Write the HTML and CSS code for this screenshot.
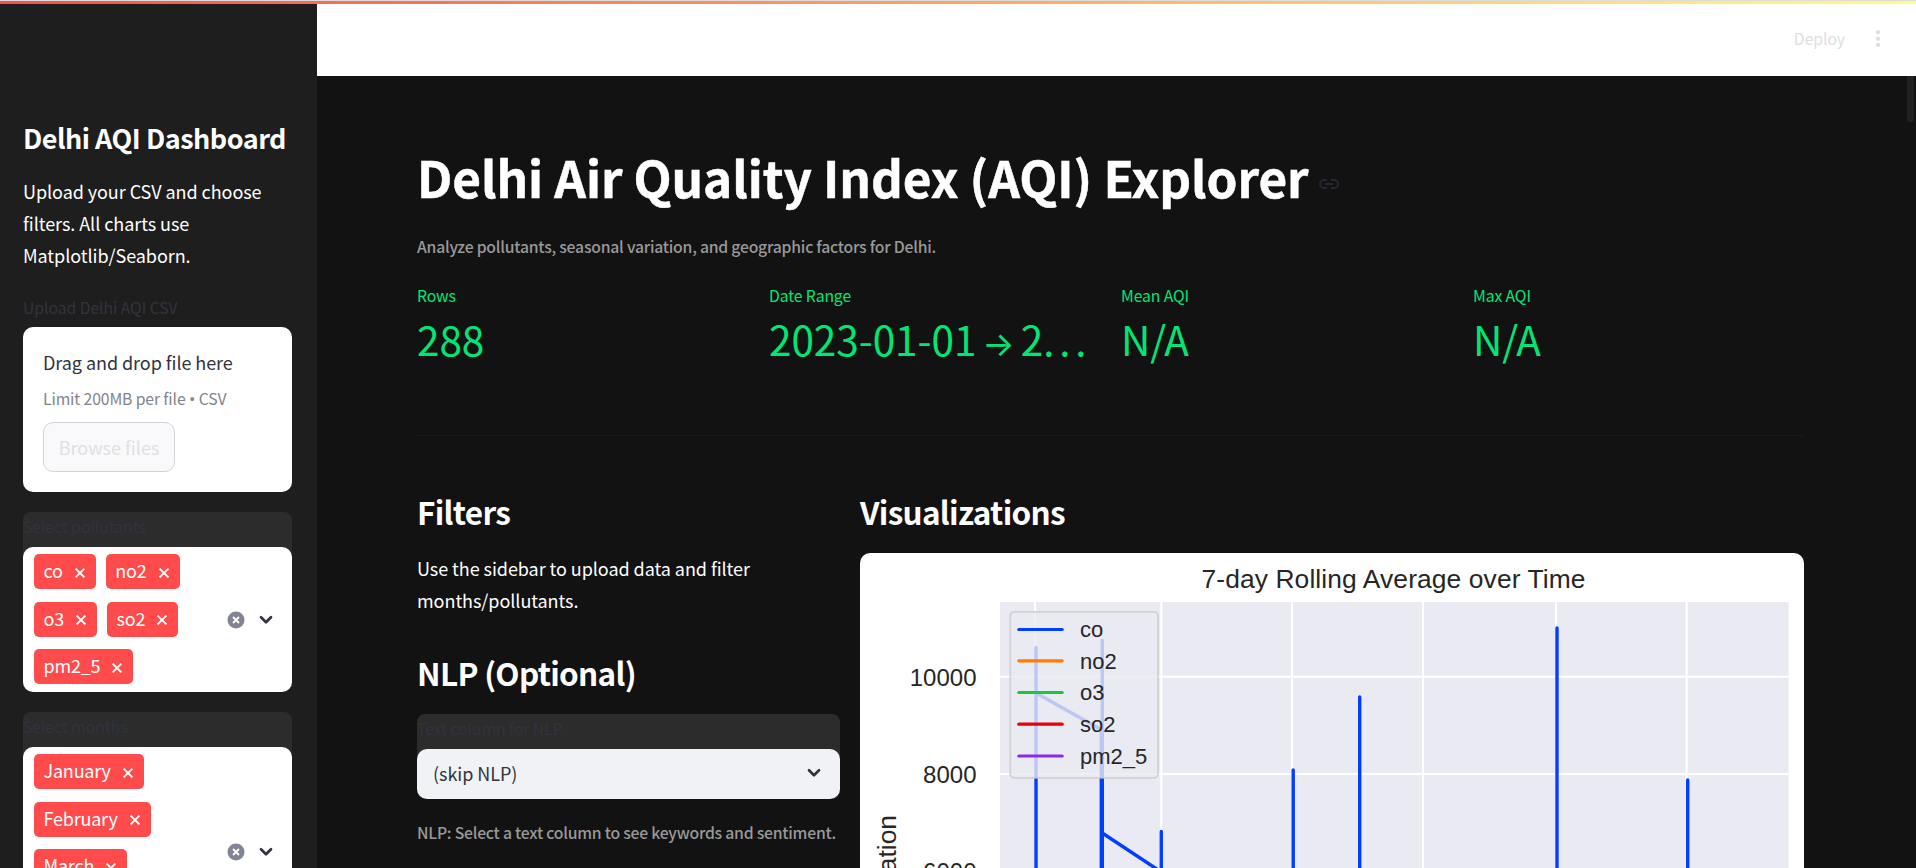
FILE: index.html
```html
<!DOCTYPE html>
<html lang="en">
<head>
<meta charset="utf-8">
<title>Delhi AQI Dashboard</title>
<link rel="stylesheet" href="styles.css">
</head>
<body>
<svg class="defs" width="0" height="0" aria-hidden="true">
  <symbol id="x" viewBox="0 0 12 12"><path d="M1.6 1.6l8.8 8.8M10.4 1.6l-8.8 8.8" fill="none" stroke="#fff" stroke-width="1.9"/></symbol>
  <symbol id="chev" viewBox="0 0 14 10"><path d="M2 2.3l5 4.9 5-4.9" fill="none" stroke="#31333f" stroke-width="2.7" stroke-linecap="round" stroke-linejoin="round"/></symbol>
  <symbol id="clear" viewBox="0 0 18 18"><circle cx="9" cy="9" r="8.5" fill="#808495"/><path d="M6 6l6 6M12 6l-6 6" stroke="#fff" stroke-width="1.8"/></symbol>
</svg>
<div class="rainbow"></div>
<div class="app">
  <aside class="sidebar">
    <h2 class="side-title">Delhi AQI Dashboard</h2>
    <p class="body side-text">Upload your CSV and choose filters. All charts use Matplotlib/Seaborn.</p>
    <div class="label upload-label">Upload Delhi AQI CSV</div>
    <div class="dropzone">
      <div class="drop-title">Drag and drop file here</div>
      <div class="drop-hint">Limit 200MB per file <span class="bullet">•</span> CSV</div>
      <button class="browse">Browse files</button>
    </div>
    <div class="select">
      <div class="label">Select pollutants</div>
      <div class="multi multi-pollutants">
        <div class="tags">
          <span class="tag">co<svg><use href="#x"/></svg></span>
          <span class="tag">no2<svg><use href="#x"/></svg></span>
          <span class="tag">o3<svg><use href="#x"/></svg></span>
          <span class="tag">so2<svg><use href="#x"/></svg></span>
          <span class="tag">pm2_5<svg><use href="#x"/></svg></span>
        </div>
        <svg class="clear"><use href="#clear"/></svg>
        <svg class="chev"><use href="#chev"/></svg>
      </div>
    </div>
    <div class="select">
      <div class="label">Select months</div>
      <div class="multi multi-months">
        <div class="tags">
          <span class="tag">January<svg><use href="#x"/></svg></span>
          <span class="tag">February<svg><use href="#x"/></svg></span>
          <span class="tag">March<svg><use href="#x"/></svg></span>
        </div>
        <svg class="clear"><use href="#clear"/></svg>
        <svg class="chev"><use href="#chev"/></svg>
      </div>
    </div>
  </aside>
  <main class="main">
    <header class="topbar">
      <span class="deploy">Deploy</span>
      <svg class="kebab" viewBox="0 0 6 18"><circle cx="3" cy="2.3" r="2.2"/><circle cx="3" cy="8.6" r="2.2"/><circle cx="3" cy="14.9" r="2.2"/></svg>
    </header>
    <div class="scrollbar"></div>
    <div class="content">
      <div class="title-row">
        <h1 class="title">Delhi Air Quality Index (AQI) Explorer</h1>
        <svg class="link" viewBox="0 0 20 10"><path d="M8 1H5a4 4 0 0 0 0 8h3M12 1h3a4 4 0 0 1 0 8h-3M6 5h8" fill="none" stroke="#262730" stroke-width="1.8"/></svg>
      </div>
      <p class="caption">Analyze pollutants, seasonal variation, and geographic factors for Delhi.</p>
      <div class="metrics">
        <div class="metric"><div class="m-label">Rows</div><div class="m-value">288</div></div>
        <div class="metric"><div class="m-label">Date Range</div><div class="m-value m-range">2023-01-01 <span class="arrow">→</span> 2<span class="dots">...</span></div></div>
        <div class="metric"><div class="m-label">Mean AQI</div><div class="m-value">N/A</div></div>
        <div class="metric"><div class="m-label">Max AQI</div><div class="m-value">N/A</div></div>
      </div>
      <div class="divider"></div>
      <div class="columns">
        <section class="filters">
          <h3 class="heading">Filters</h3>
          <p class="body filter-text">Use the sidebar to upload data and filter months/pollutants.</p>
          <h3 class="heading nlp-heading">NLP (Optional)</h3>
          <div class="select nlp-select">
            <div class="label">Text column for NLP</div>
            <div class="single"><span>(skip NLP)</span><svg class="chev"><use href="#chev"/></svg></div>
          </div>
          <p class="caption nlp-caption">NLP: Select a text column to see keywords and sentiment.</p>
        </section>
        <section class="viz">
          <h3 class="heading">Visualizations</h3>
          <svg class="chart" viewBox="860 554 944 620" width="944" height="620">
            <rect x="860" y="554" width="944" height="620" rx="10" fill="#fff"/>
            <rect x="1000" y="603" width="788.5" height="500" fill="#eaeaf2"/>
            <g stroke="#fff" stroke-width="2">
              <path d="M1035 603v500M1161.3 603v500M1292 603v500M1423 603v500M1556 603v500M1686.7 603v500"/>
              <path d="M1000 677.7h788.5M1000 775h788.5M1000 872.3h788.5"/>
            </g>
            <g class="series" fill="none" stroke="#023eff" stroke-width="3.4" stroke-linecap="round" stroke-linejoin="round">
              <path d="M1036 1000V648.5M1036 694L1101 730.5M1102.3 1000V641.5M1101.3 1000V731M1103 834.5L1161.3 873V832.5V1000M1293.2 1000V771M1359.7 1000V698M1557 1000V629M1687.7 1000V781"/>
            </g>
            <rect x="1010.3" y="612.8" width="147.7" height="166" rx="4" fill="#eaeaf2" fill-opacity=".8" stroke="#ccc" stroke-opacity=".8" stroke-width="1.8"/>
            <g stroke-width="3.2" stroke-linecap="round">
              <path d="M1018.8 630.5h43.4" stroke="#023eff"/>
              <path d="M1018.8 661.8h43.4" stroke="#ff7c00"/>
              <path d="M1018.8 693.5h43.4" stroke="#1ac938"/>
              <path d="M1018.8 725.2h43.4" stroke="#e8000b"/>
              <path d="M1018.8 757h43.4" stroke="#8b2be2"/>
            </g>
            <g class="legend-text">
              <text x="1080" y="637.7">co</text>
              <text x="1080" y="669.5">no2</text>
              <text x="1080" y="701">o3</text>
              <text x="1080" y="732.5">so2</text>
              <text x="1080" y="764.5">pm2_5</text>
            </g>
            <g class="tick-text" text-anchor="end">
              <text x="976.5" y="686.5">10000</text>
              <text x="976.5" y="783.7">8000</text>
              <text x="976.5" y="881">6000</text>
            </g>
            <text class="axis-text" x="1201.5" y="589" textLength="384">7-day Rolling Average over Time</text>
            <text class="axis-text" transform="translate(895.7 816) rotate(-90)" text-anchor="end">Concentration</text>
          </svg>
        </section>
      </div>
    </div>
  </main>
</div>
</body>
</html>
```
FILE: styles.css
```css
* { box-sizing: border-box; }
html, body { margin: 0; height: 100%; overflow: hidden; }
body {
  background: #121212;
  color: #fff;
  font-family: "Noto Sans CJK SC", "Noto Sans", sans-serif;
  font-size: 18px;
  line-height: 32px;
  letter-spacing: -.06px;
}
h1, h2, h3, p { margin: 0; }
.defs { position: absolute; }
.rainbow {
  height: 4px;
  border-top: 1px solid #dcdcdc;
  background: linear-gradient(90deg, #ff4b4b, #fffd80);
}
.app { display: flex; height: 864px; overflow: hidden; }

.sidebar { width: 317px; flex: none; background: #1e1e1e; padding: 116px 25px 0 23px; overflow: hidden; }
.side-title { font-size: 27px; font-weight: 600; line-height: 36px; height: 55px; white-space: nowrap; letter-spacing: -.5px; }
.side-text { height: 120px; }
.label { font-size: 15.75px; line-height: 25px; color: #31333f; letter-spacing: -.06px; }
.upload-label { height: 32px; }
.dropzone { height: 165px; border-radius: 10px; background: #fff; padding: 19px 20px; color: #31333f; margin-bottom: 20px; }
.drop-title { line-height: 32px; height: 40px; }
.drop-hint { font-size: 15.75px; line-height: 26px; height: 36px; color: #83848c; white-space: nowrap; letter-spacing: -.12px; }
.bullet { font-family: "Open Sans", sans-serif; font-size: 17px; line-height: 1; }
.browse {
  display: block; width: 132px; height: 50px; padding: 0;
  border: 1px solid #d3d4d9; border-radius: 10px; background: #f9f9fb;
  color: #e0e0e0; font: 18px/46px "Noto Sans CJK SC", sans-serif;
}
.select { background: #2c2c2c; border-radius: 8px; margin-bottom: 20px; }
.select .label { height: 35px; padding-top: 2px; }
.multi { display: flex; align-items: center; background: #fff; border-radius: 10px; padding-left: 11px; }
.multi-pollutants { height: 145px; }
.multi-months { height: 210px; align-items: flex-start; }
.multi-months > svg { margin-top: 96px; }
.multi-months > .chev { margin-top: 100px; }
.tags { width: 193px; height: 131px; display: flex; flex-wrap: wrap; align-content: flex-start; gap: 12.5px 10px; }
.multi-months .tags { margin-top: 7px; flex-direction: column; align-items: flex-start; flex-wrap: nowrap; }
.tag {
  display: flex; align-items: center; height: 35px; padding: 0 10px 2px 9.5px;
  background: #ff4b4b; border-radius: 5px; line-height: 33px; flex: none; letter-spacing: -.2px;
}
.tag svg { width: 12px; height: 12px; margin: 4px 0 0 11px; }
.clear { width: 18px; height: 18px; flex: none; }
.chev { width: 14px; height: 10px; flex: none; margin-left: 14px; }

.main { flex: 1; min-width: 0; position: relative; }
.topbar { height: 72px; background: #fff; color: #e0e0e0; display: flex; justify-content: flex-end; align-items: center; padding: 0 35px 2px 0; }
.deploy { font-size: 15.75px; line-height: 24px; margin-right: 30px; }
.kebab { width: 6px; height: 18px; fill: #dfdfdf; }
.scrollbar { position: absolute; right: 2px; top: 72px; width: 7px; height: 46px; background: #212124; border-radius: 0 0 4px 4px; }
.content { padding: 68px 112px 0 100px; }
.title-row { display: flex; height: 89px; }
.title { font-size: 49.5px; font-weight: 700; line-height: 66px; white-space: nowrap; letter-spacing: -.07px; -webkit-text-stroke: .5px #fff; }
.link { width: 20px; height: 10px; margin: 35px 0 0 10px; }
.caption { font-size: 15.75px; line-height: 28px; color: #999; font-weight: 500; white-space: nowrap; letter-spacing: -.23px; }
.metrics { display: grid; grid-template-columns: repeat(4, 332px); gap: 20px; margin-top: 21px; color: #00e676; white-space: nowrap; }
.m-label { font-size: 15.75px; line-height: 28px; letter-spacing: -.12px; }
.m-value { font-size: 40.5px; line-height: 57px; height: 57px; }
.arrow { font-family: "Inter", sans-serif; font-size: 34px; line-height: 1; margin: 0 -3px; }
.dots { letter-spacing: 4.8px; }
.divider { height: 1px; background: #1b1b1d; margin-top: 68px; }
.columns { display: grid; grid-template-columns: 423px 944px; gap: 20px; margin-top: 54px; }
.heading { font-size: 31.5px; font-weight: 600; line-height: 42px; height: 63px; letter-spacing: -.7px; }
.filter-text { height: 99px; margin-top: -1px; }
.nlp-select { margin-bottom: 20px; }
.single { height: 50px; background: #f0f2f6; border-radius: 10px; color: #31333f; display: flex; justify-content: space-between; align-items: center; padding: 0 19px 2px 16px; }
.chart { display: block; font-family: "Liberation Sans", Arial, sans-serif; fill: #262626; letter-spacing: 0; }
.legend-text { font-size: 22px; }
.tick-text { font-size: 24px; }
.axis-text { font-size: 26.4px; }
```
